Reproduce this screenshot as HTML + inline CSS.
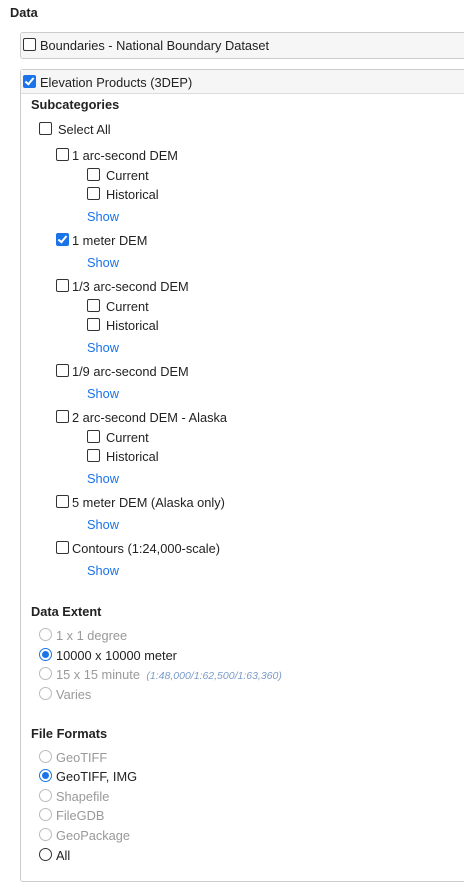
<!DOCTYPE html>
<html><head><style>
html,body{margin:0;width:464px;height:882px;overflow:hidden}
body{background:#fff;font-family:"Liberation Sans",sans-serif;font-size:12.8px;color:#222;position:relative}
.t{position:absolute;white-space:nowrap;line-height:16px}
.b{font-weight:bold;color:#222}
.cb{position:absolute;width:11px;height:11px;border:1px solid #333;border-radius:2px;background:#fff}
.cb.on{background:#1a73e8;border-color:#1a73e8}
.cb.on:after{content:"";position:absolute;left:3px;top:0px;width:3px;height:7px;border:solid #fff;border-width:0 2px 2px 0;transform:rotate(40deg)}
.rd{position:absolute;width:11px;height:11px;border:1px solid #bbb;border-radius:50%;background:#fff}
.rd.en{border-color:#333}
.rd.on{border:1px solid #1a73e8}
.rd.on:after{content:"";position:absolute;left:2px;top:2px;width:7px;height:7px;border-radius:50%;background:#1a73e8}
.g{color:#999}
.s{color:#1a73e8}
</style></head><body>
<div class="t b" style="left:10px;top:5px">Data</div>
<div style="position:absolute;left:20px;top:32px;width:460px;height:25px;border:1px solid #ccc;border-radius:3px;background:#f6f6f6"></div>
<div class="cb" style="left:23px;top:38px"></div>
<div class="t" style="left:40px;top:38px">Boundaries - National Boundary Dataset</div>
<div style="position:absolute;left:20px;top:69px;width:460px;height:811px;border:1px solid #ccc;border-radius:3px"></div>
<div style="position:absolute;left:21px;top:70px;width:460px;height:23px;background:#f6f6f6;border-bottom:1px solid #ddd"></div>
<div class="cb on" style="left:23px;top:75px"></div>
<div class="t" style="left:40px;top:75px">Elevation Products (3DEP)</div>
<div class="t b" style="left:31px;top:97px">Subcategories</div>
<div class="cb" style="left:39px;top:122px"></div><div class="t" style="left:58px;top:122px">Select All</div>

<div class="cb" style="left:56px;top:148px"></div><div class="t" style="left:72px;top:148px">1 arc-second DEM</div>
<div class="cb" style="left:87px;top:168px"></div><div class="t" style="left:106px;top:168px">Current</div>
<div class="cb" style="left:87px;top:187px"></div><div class="t" style="left:106px;top:187px">Historical</div>
<div class="t s" style="left:87px;top:209px">Show</div>

<div class="cb on" style="left:56px;top:233px"></div><div class="t" style="left:72px;top:233px">1 meter DEM</div>
<div class="t s" style="left:87px;top:255px">Show</div>

<div class="cb" style="left:56px;top:279px"></div><div class="t" style="left:72px;top:279px">1/3 arc-second DEM</div>
<div class="cb" style="left:87px;top:299px"></div><div class="t" style="left:106px;top:299px">Current</div>
<div class="cb" style="left:87px;top:318px"></div><div class="t" style="left:106px;top:318px">Historical</div>
<div class="t s" style="left:87px;top:340px">Show</div>

<div class="cb" style="left:56px;top:364px"></div><div class="t" style="left:72px;top:364px">1/9 arc-second DEM</div>
<div class="t s" style="left:87px;top:386px">Show</div>

<div class="cb" style="left:56px;top:410px"></div><div class="t" style="left:72px;top:410px">2 arc-second DEM - Alaska</div>
<div class="cb" style="left:87px;top:430px"></div><div class="t" style="left:106px;top:430px">Current</div>
<div class="cb" style="left:87px;top:449px"></div><div class="t" style="left:106px;top:449px">Historical</div>
<div class="t s" style="left:87px;top:471px">Show</div>

<div class="cb" style="left:56px;top:495px"></div><div class="t" style="left:72px;top:495px">5 meter DEM (Alaska only)</div>
<div class="t s" style="left:87px;top:517px">Show</div>

<div class="cb" style="left:56px;top:541px"></div><div class="t" style="left:72px;top:541px">Contours (1:24,000-scale)</div>
<div class="t s" style="left:87px;top:563px">Show</div>

<div class="t b" style="left:31px;top:604px">Data Extent</div>
<div class="rd" style="left:39px;top:628px"></div><div class="t g" style="left:56px;top:628px">1 x 1 degree</div>
<div class="rd on" style="left:39px;top:648px"></div><div class="t" style="left:56px;top:648px">10000 x 10000 meter</div>
<div class="rd" style="left:39px;top:667px"></div><div class="t g" style="left:56px;top:667px">15 x 15 minute <i style="color:#7b9cc8;font-size:10.5px">&nbsp;(1:48,000/1:62,500/1:63,360)</i></div>
<div class="rd" style="left:39px;top:687px"></div><div class="t g" style="left:56px;top:687px">Varies</div>

<div class="t b" style="left:31px;top:726px">File Formats</div>
<div class="rd" style="left:39px;top:750px"></div><div class="t g" style="left:56px;top:750px">GeoTIFF</div>
<div class="rd on" style="left:39px;top:769px"></div><div class="t" style="left:56px;top:769px">GeoTIFF, IMG</div>
<div class="rd" style="left:39px;top:789px"></div><div class="t g" style="left:56px;top:789px">Shapefile</div>
<div class="rd" style="left:39px;top:808px"></div><div class="t g" style="left:56px;top:808px">FileGDB</div>
<div class="rd" style="left:39px;top:828px"></div><div class="t g" style="left:56px;top:828px">GeoPackage</div>
<div class="rd en" style="left:39px;top:848px"></div><div class="t" style="left:56px;top:848px">All</div>
</body></html>
